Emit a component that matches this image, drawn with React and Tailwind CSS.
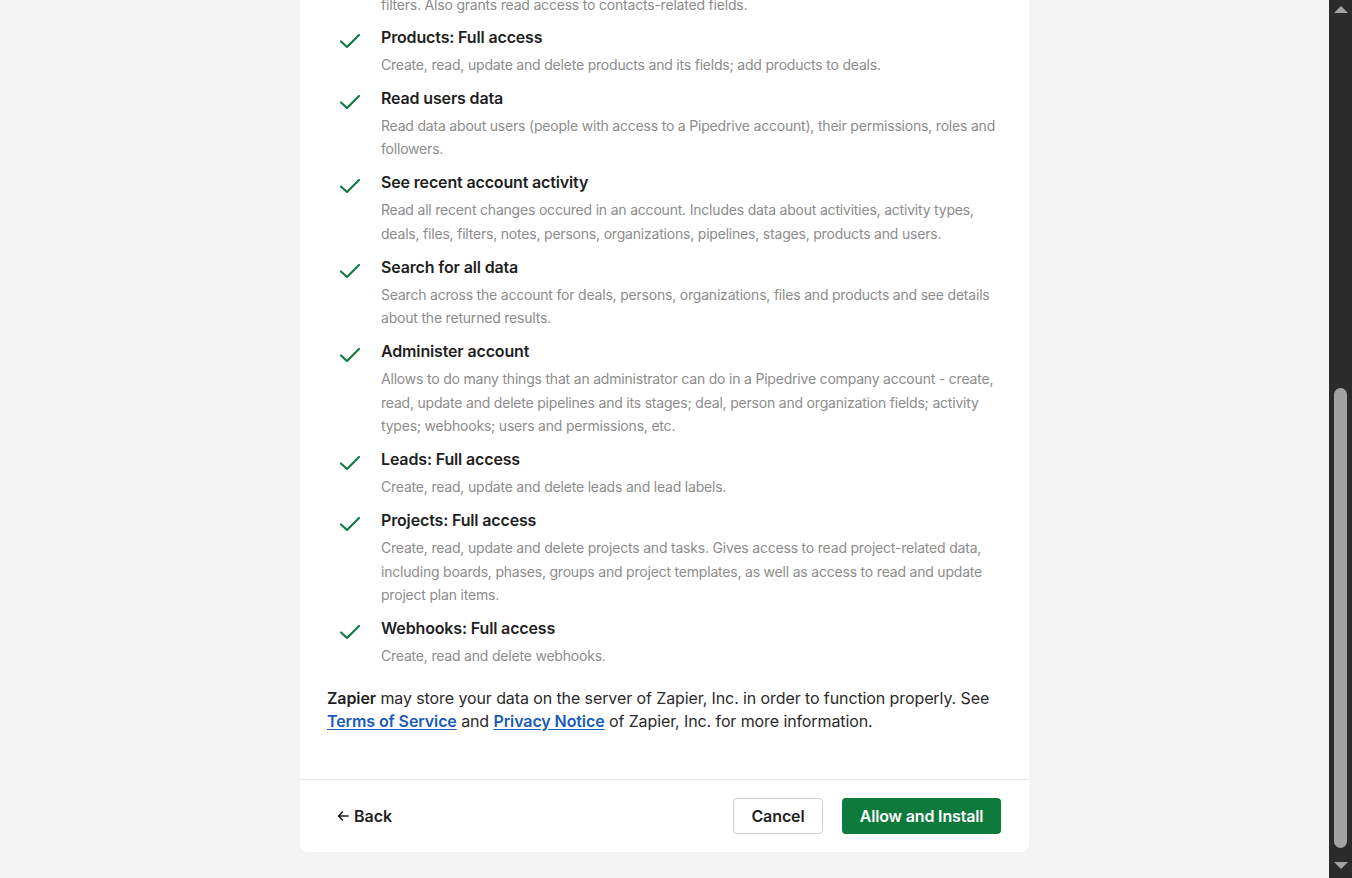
import React from "react";

const items = [
  { t: "Products: Full access", d: "Create, read, update and delete products and its fields; add products to deals." },
  { t: "Read users data", d: "Read data about users (people with access to a Pipedrive account), their permissions, roles and followers." },
  { t: "See recent account activity", d: "Read all recent changes occured in an account. Includes data about activities, activity types, deals, files, filters, notes, persons, organizations, pipelines, stages, products and users." },
  { t: "Search for all data", d: "Search across the account for deals, persons, organizations, files and products and see details about the returned results." },
  { t: "Administer account", d: "Allows to do many things that an administrator can do in a Pipedrive company account - create, read, update and delete pipelines and its stages; deal, person and organization fields; activity types; webhooks; users and permissions, etc." },
  { t: "Leads: Full access", d: "Create, read, update and delete leads and lead labels." },
  { t: "Projects: Full access", d: "Create, read, update and delete projects and tasks. Gives access to read project-related data, including boards, phases, groups and project templates, as well as access to read and update project plan items." },
  { t: "Webhooks: Full access", d: "Create, read and delete webhooks." },
];

function Check() {
  return (
    <svg width="22" height="16" viewBox="0 0 22 16" fill="none">
      <path d="M2 8.5 L8 14 L20 2" stroke="#137a42" strokeWidth="2.2" strokeLinecap="round" strokeLinejoin="round" />
    </svg>
  );
}

export default function App() {
  return (
    <div className="flex h-[878px] w-[1352px] overflow-hidden bg-[#f4f4f4]" style={{ fontFamily: "Inter, 'Noto Sans', sans-serif" }}>
      <div className="flex flex-1 justify-center">
        <div className="flex h-[852px] w-[729px] flex-col rounded-b-lg bg-white">
          <div className="px-[27px]">
            <div className="-mt-[7px] pl-[54px] text-[14px] leading-[23.5px] tracking-[-0.2px] text-[#8c8c8c]">
              filters. Also grants read access to contacts-related fields.
            </div>
            <div className="mt-[8px] flex flex-col gap-[9.5px]">
              {items.map((it) => (
                <div key={it.t} className="flex">
                  <div className="w-[54px] shrink-0 pl-[12px] pt-[8px]">
                    <Check />
                  </div>
                  <div className="flex-1">
                    <div className="text-[16px] font-semibold leading-6 tracking-[-0.15px] text-[#1f1f1f]">{it.t}</div>
                    <div className="mt-[4px] text-[14px] leading-[23.5px] tracking-[-0.2px] text-[#8c8c8c]">{it.d}</div>
                  </div>
                </div>
              ))}
            </div>
            <p className="mt-[19px] text-[16px] leading-[23px] tracking-[-0.1px] text-[#2b2b2b]">
              <span className="font-semibold text-[#1f1f1f]">Zapier</span> may store your data on the server of Zapier, Inc. in order to function properly. See{" "}
              <a className="font-semibold text-[#1a5cb8] underline underline-offset-2">Terms of Service</a> and{" "}
              <a className="font-semibold text-[#1a5cb8] underline underline-offset-2">Privacy Notice</a> of Zapier, Inc. for more information.
            </p>
          </div>
          <div className="mt-auto flex h-[73px] items-center border-t border-[#e8e8e8] px-[28px]">
            <button className="flex items-center gap-[5px] pl-[9px] text-[16px] font-semibold text-[#1f1f1f]">
              <svg width="12" height="12" viewBox="0 0 12 12" fill="none">
                <path d="M11 6H1.5M5.5 2L1.5 6L5.5 10" stroke="#1f1f1f" strokeWidth="1.6" strokeLinecap="round" strokeLinejoin="round" />
              </svg>
              Back
            </button>
            <div className="ml-auto flex gap-[19px]">
              <button className="h-[36px] w-[90px] rounded-[4px] border border-[#cfcfcf] bg-white text-[16px] font-semibold tracking-[-0.1px] text-[#1f1f1f]">Cancel</button>
              <button className="h-[36px] w-[159px] rounded-[4px] bg-[#0b7a3b] text-[16px] font-semibold tracking-[-0.15px] text-white">Allow and Install</button>
            </div>
          </div>
        </div>
      </div>
      <div className="flex w-[23px] flex-col items-center bg-[#2b2b2b]">
        <div className="mt-[6px] h-0 w-0 border-x-[7px] border-b-[7px] border-x-transparent border-b-[#a3a3a3]" />
        <div className="mt-[375px] h-[460px] w-[13px] rounded-full bg-[#a3a3a3]" />
        <div className="mt-[14px] h-0 w-0 border-x-[7px] border-t-[7px] border-x-transparent border-t-[#a3a3a3]" />
      </div>
    </div>
  );
}
